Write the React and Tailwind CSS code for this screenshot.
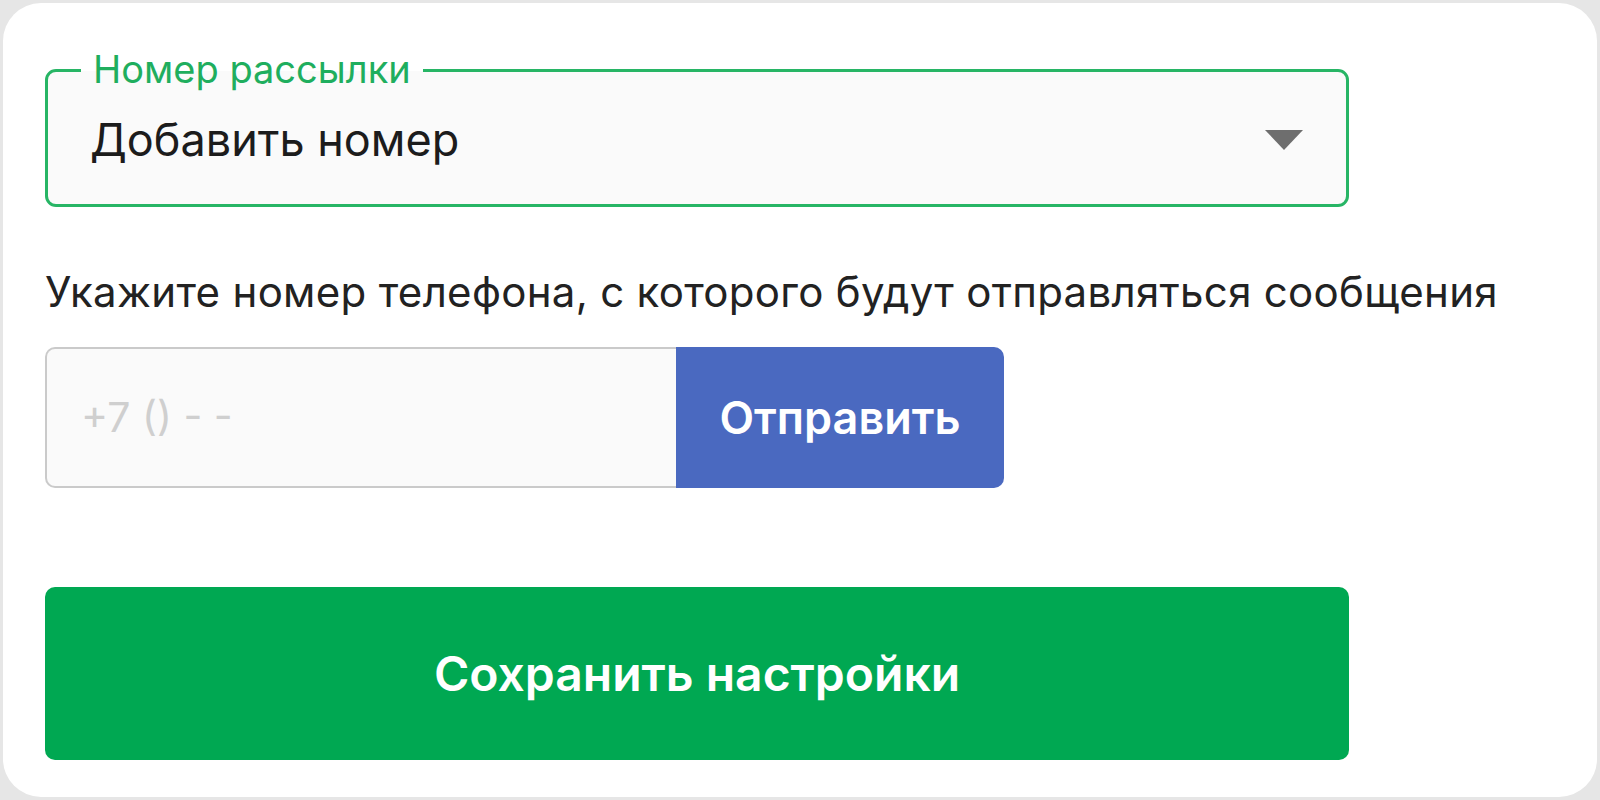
export default function App() {
  return (
    <div className="w-[1600px] h-[800px] bg-[#e6e6e6] p-[3px]" style={{ fontFamily: 'Inter, "Noto Sans", sans-serif' }}>
      <div className="h-full bg-white rounded-[38px] pl-[42px] pt-[66px]">
        {/* Выбор номера */}
        <div className="relative w-[1304px] h-[138px] border-[3px] border-[#27b565] rounded-[11px] bg-[#fafafa] flex items-center justify-between pl-[42px] pr-[43px]">
          <span className="absolute left-[33px] -top-[27px] px-[12px] text-[38px] leading-[48px] text-[#1fae5e] bg-[linear-gradient(to_bottom,#ffffff_54%,#fafafa_54%)]">
            Номер рассылки
          </span>
          <span className="text-[45px] leading-[54px] text-[#1c1c1c] mt-[4px]">Добавить номер</span>
          <svg width="38" height="20" viewBox="0 0 38 20" className="mt-[4px]">
            <path d="M0 0 H38 L19 20 Z" fill="#6e6e6e" />
          </svg>
        </div>

        <p className="mt-[60px] text-[42px] leading-[50px] tracking-[0.3px] text-[#222]">
          Укажите номер телефона, с которого будут отправляться сообщения
        </p>

        {/* Телефон */}
        <div className="mt-[30px] flex h-[141px]">
          <div className="w-[631px] h-full border-2 border-r-0 border-[#cacaca] rounded-l-[10px] bg-[#fafafa] flex items-center pl-[34px]">
            <span className="text-[41px] text-[#cfcfcf]">+7 () - -</span>
          </div>
          <button className="w-[328px] h-full bg-[#4a69c0] rounded-r-[10px] text-white text-[45px] font-semibold">
            Отправить
          </button>
        </div>

        <button className="mt-[99px] w-[1304px] h-[173px] bg-[#00a852] rounded-[10px] text-white text-[48px] font-semibold">
          Сохранить настройки
        </button>
      </div>
    </div>
  );
}
